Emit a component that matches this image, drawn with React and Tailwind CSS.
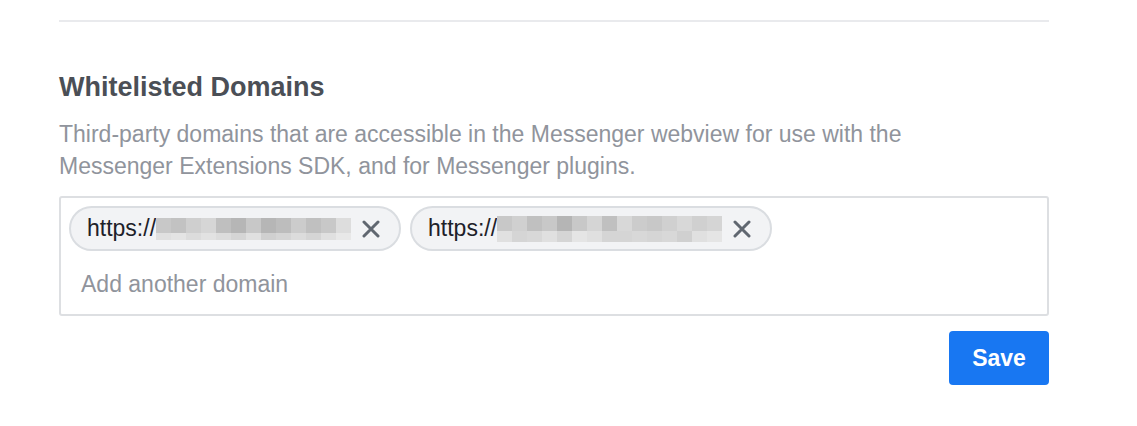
import React from "react";

const chips = [
  {
    top: ["#c8c8c8", "#c2c2c2", "#cfcfcf", "#d6d6d6", "#bfbfbf", "#b6b6b6", "#c8c8c8", "#b6b6b6", "#bdbdbd", "#cccccc", "#c0c0c0", "#c8c8c8", "#dddddd"],
    bottom: ["#e0e0e0", "#e4e4e4", "#dcdcdc", "#e2e2e2", "#dcdcdc", "#d5d5d5", "#e0e0e0", "#d0d0d0", "#d5d5d5", "#dcdcdc", "#d5d5d5", "#e0e0e0", "#e8e8e8"],
    topH: "h-[15px]",
    bottomH: "h-[7px]",
  },
  {
    top: ["#c8c8c8", "#d0d0d0", "#c0c0c0", "#c8c8c8", "#b5b5b5", "#c8c8c8", "#d5d5d5", "#c0c0c0", "#d8d8d8", "#cccccc", "#c8c8c8", "#d0d0d0", "#d8d8d8", "#d0d0d0", "#d5d5d5"],
    bottom: ["#e0e0e0", "#d5d5d5", "#d8d8d8", "#e0e0e0", "#d5d5d5", "#e5e5e5", "#e0e0e0", "#d5d5d5", "#d5d5d5", "#d8d8d8", "#d5d5d5", "#d8d8d8", "#d0d0d0", "#e0e0e0", "#e5e5e5"],
    topH: "h-[15px]",
    bottomH: "h-[11px]",
  },
];

const CloseIcon = () => (
  <svg width="18" height="18" viewBox="0 0 18 18" className="shrink-0">
    <path d="M2 2 L16 16 M16 2 L2 16" stroke="#606770" strokeWidth="3" strokeLinecap="round" />
  </svg>
);

// pixelated blur that hides the domain name
const Blur = ({ chip }) => (
  <div className="flex flex-col mt-[1px]">
    <div className="flex">
      {chip.top.map((c, i) => (
        <div key={i} className={`w-[15px] ${chip.topH}`} style={{ backgroundColor: c }} />
      ))}
    </div>
    <div className="flex">
      {chip.bottom.map((c, i) => (
        <div key={i} className={`w-[15px] ${chip.bottomH}`} style={{ backgroundColor: c }} />
      ))}
    </div>
  </div>
);

const DomainChip = ({ chip }) => (
  <div className="flex items-center h-[45px] pl-[16px] pr-[19px] rounded-full border-2 border-[#dadde1] bg-[#f2f3f5]">
    <span className="text-[23px] text-[#1d2129]">https://</span>
    <Blur chip={chip} />
    <span className="ml-[11px] flex">
      <CloseIcon />
    </span>
  </div>
);

export default function App() {
  return (
    <div className="min-h-[426px] bg-white font-['Liberation_Sans',Arial,sans-serif]">
      <div className="ml-[59px] w-[990px] pt-[20px]">
        <div className="h-[2px] bg-[#e9eaed]" />

        <h2 className="mt-[49px] text-[27px] leading-[32px] font-bold text-[#4b4f56]">
          Whitelisted Domains
        </h2>
        <p className="mt-[15px] text-[23px] leading-[32px] text-[#90949c] whitespace-nowrap">
          Third-party domains that are accessible in the Messenger webview for use with the
          <br />
          Messenger Extensions SDK, and for Messenger plugins.
        </p>

        <div className="mt-[14px] h-[120px] border-2 border-[#dddfe2] rounded-[3px] pt-[8px] px-[8px]">
          <div className="flex gap-[9px]">
            {chips.map((chip, i) => (
              <DomainChip key={i} chip={chip} />
            ))}
          </div>
          <div className="mt-[17px] pl-[12px] text-[23px] leading-[32px] text-[#90949c]">
            Add another domain
          </div>
        </div>

        <div className="flex justify-end mt-[15px]">
          <button className="w-[100px] h-[54px] rounded-[4px] bg-[#1877f2] text-white text-[23px] font-bold">
            Save
          </button>
        </div>
      </div>
    </div>
  );
}
